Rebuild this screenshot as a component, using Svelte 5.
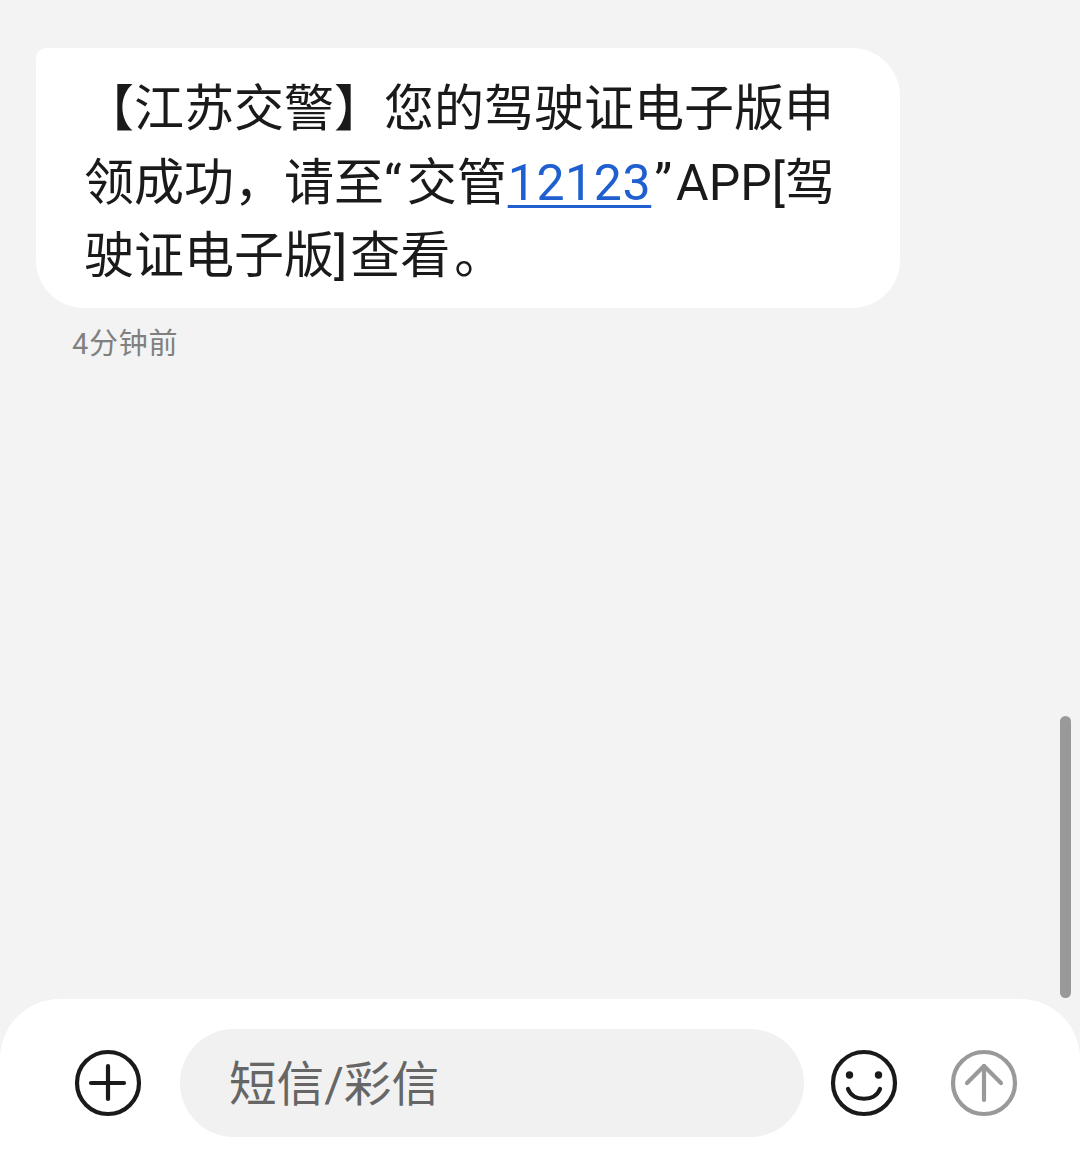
<script>
  const fontNote = 'message screen';
</script>

<div class="screen" aria-label={fontNote}>
  <main class="thread">
    <div class="bubble">
      <p>【江苏交警】您的驾驶证电子版申<br />领成功，请至<span class="open">“</span>交管<span class="link">12123</span><span class="close">”</span>APP[驾<br />驶证电子版]<span class="after">查</span>看<span class="stop">。</span></p>
    </div>
    <div class="time">4分钟前</div>
  </main>

  <footer class="bar">
    <svg class="icon" viewBox="0 0 68 68" fill="none" stroke="#1a1a1a" stroke-width="4.2" stroke-linecap="round">
      <circle cx="34" cy="34" r="31" />
      <path d="M17 34H50" />
      <path d="M34 17V50" />
    </svg>
    <div class="input">短信/彩信</div>
    <svg class="icon smile" viewBox="0 0 68 68" fill="none" stroke="#1a1a1a" stroke-width="4.2" stroke-linecap="round">
      <circle cx="34" cy="34" r="31" />
      <circle cx="19.500" cy="26" r="3.700" fill="#1a1a1a" stroke="none" />
      <circle cx="48.500" cy="26" r="3.700" fill="#1a1a1a" stroke="none" />
      <path d="M18 40C23 53 45 53 50 40" />
    </svg>
    <svg class="icon send" viewBox="0 0 68 68" fill="none" stroke="#999999" stroke-width="4.2" stroke-linecap="round" stroke-linejoin="round">
      <circle cx="34" cy="34" r="31" />
      <path d="M34 51V17" />
      <path d="M17 34L34 17L51 34" />
    </svg>
  </footer>

  <div class="scrollbar"></div>
</div>

<style>
  :global(body) {
    margin: 0;
    background: #f3f3f3;
  }
  .screen {
    position: relative;
    width: 1080px;
    height: 1167px;
    display: flex;
    flex-direction: column;
    overflow: hidden;
    background: #f3f3f3;
    font-family: Roboto, "Noto Sans CJK SC", sans-serif;
  }
  .thread {
    flex: 1;
    padding: 48px 0 0 36px;
  }
  .bubble {
    box-sizing: border-box;
    width: 864px;
    height: 260px;
    padding: 25px 48px 0;
    background: #ffffff;
    border-radius: 10px 48px 48px 48px;
  }
  .bubble p {
    margin: 0;
    font-size: 50px;
    line-height: 73.500px;
    color: #1a1a1a;
    white-space: nowrap;
  }
  .open {
    margin-right: 5px;
  }
  .close {
    margin: 0 4px 0 3px;
  }
  .after {
    margin-left: 3px;
  }
  .stop {
    margin-left: 4px;
  }
  .link {
    color: #1f5fd0;
    letter-spacing: 0.600px;
    margin-left: 1px;
    text-decoration: underline;
    text-decoration-thickness: 2.500px;
    text-underline-offset: 5px;
  }
  .time {
    margin: 18px 0 0 36px;
    font-size: 29px;
    letter-spacing: 0.700px;
    line-height: 36px;
    color: #808080;
  }
  .bar {
    box-sizing: border-box;
    height: 168px;
    display: flex;
    align-items: flex-start;
    padding: 30px 0 0 74px;
    background: #ffffff;
    border-radius: 60px 60px 0 0;
  }
  .icon {
    width: 68px;
    height: 68px;
    flex: none;
    margin-top: 20px;
  }
  .input {
    box-sizing: border-box;
    width: 624px;
    height: 108px;
    margin-left: 38px;
    padding-left: 49px;
    border-radius: 54px;
    background: #f1f1f1;
    color: #666666;
    font-size: 47.600px;
    line-height: 112px;
  }
  .smile {
    margin-left: 26px;
  }
  .send {
    margin-left: 52px;
  }
  .scrollbar {
    position: absolute;
    left: 1060px;
    top: 716px;
    width: 11px;
    height: 282px;
    border-radius: 6px;
    background: #999999;
  }
</style>
